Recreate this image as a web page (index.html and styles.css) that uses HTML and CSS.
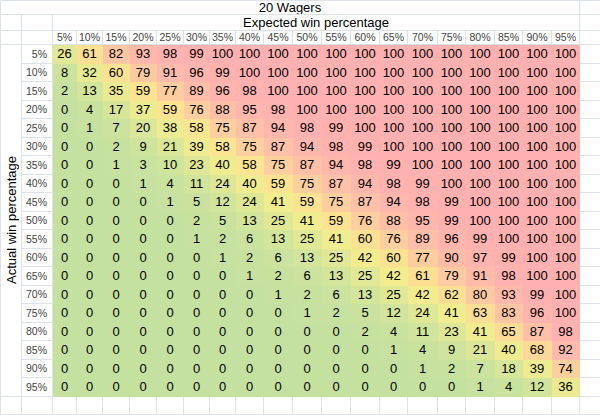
FILE: index.html
```html
<!DOCTYPE html>
<html>
<head>
<meta charset="utf-8">
<link rel="stylesheet" href="styles.css">
</head>
<body>
<div class="sheet">
  <div class="c title">20 Wagers</div><div class="c"></div>
  <div class="c"></div><div class="c"></div><div class="c xlabel">Expected win percentage</div><div class="c"></div>
  <div class="c"></div><div class="c"></div>
  <div class="c h">5%</div><div class="c h">10%</div><div class="c h">15%</div><div class="c h">20%</div><div class="c h">25%</div><div class="c h">30%</div><div class="c h">35%</div><div class="c h">40%</div><div class="c h">45%</div><div class="c h">50%</div><div class="c h">55%</div><div class="c h">60%</div><div class="c h">65%</div><div class="c h">70%</div><div class="c h">75%</div><div class="c h">80%</div><div class="c h">85%</div><div class="c h">90%</div><div class="c h">95%</div><div class="c"></div>
  <div class="c ylabel"><span>Actual win percentage</span></div>
  <div class="c r">5%</div><div class="c v">26</div><div class="c v">61</div><div class="c v">82</div><div class="c v">93</div><div class="c v">98</div><div class="c v">99</div><div class="c v">100</div><div class="c v">100</div><div class="c v">100</div><div class="c v">100</div><div class="c v">100</div><div class="c v">100</div><div class="c v">100</div><div class="c v">100</div><div class="c v">100</div><div class="c v">100</div><div class="c v">100</div><div class="c v">100</div><div class="c v">100</div><div class="c"></div>
  <div class="c r">10%</div><div class="c v">8</div><div class="c v">32</div><div class="c v">60</div><div class="c v">79</div><div class="c v">91</div><div class="c v">96</div><div class="c v">99</div><div class="c v">100</div><div class="c v">100</div><div class="c v">100</div><div class="c v">100</div><div class="c v">100</div><div class="c v">100</div><div class="c v">100</div><div class="c v">100</div><div class="c v">100</div><div class="c v">100</div><div class="c v">100</div><div class="c v">100</div><div class="c"></div>
  <div class="c r">15%</div><div class="c v">2</div><div class="c v">13</div><div class="c v">35</div><div class="c v">59</div><div class="c v">77</div><div class="c v">89</div><div class="c v">96</div><div class="c v">98</div><div class="c v">100</div><div class="c v">100</div><div class="c v">100</div><div class="c v">100</div><div class="c v">100</div><div class="c v">100</div><div class="c v">100</div><div class="c v">100</div><div class="c v">100</div><div class="c v">100</div><div class="c v">100</div><div class="c"></div>
  <div class="c r">20%</div><div class="c v">0</div><div class="c v">4</div><div class="c v">17</div><div class="c v">37</div><div class="c v">59</div><div class="c v">76</div><div class="c v">88</div><div class="c v">95</div><div class="c v">98</div><div class="c v">100</div><div class="c v">100</div><div class="c v">100</div><div class="c v">100</div><div class="c v">100</div><div class="c v">100</div><div class="c v">100</div><div class="c v">100</div><div class="c v">100</div><div class="c v">100</div><div class="c"></div>
  <div class="c r">25%</div><div class="c v">0</div><div class="c v">1</div><div class="c v">7</div><div class="c v">20</div><div class="c v">38</div><div class="c v">58</div><div class="c v">75</div><div class="c v">87</div><div class="c v">94</div><div class="c v">98</div><div class="c v">99</div><div class="c v">100</div><div class="c v">100</div><div class="c v">100</div><div class="c v">100</div><div class="c v">100</div><div class="c v">100</div><div class="c v">100</div><div class="c v">100</div><div class="c"></div>
  <div class="c r">30%</div><div class="c v">0</div><div class="c v">0</div><div class="c v">2</div><div class="c v">9</div><div class="c v">21</div><div class="c v">39</div><div class="c v">58</div><div class="c v">75</div><div class="c v">87</div><div class="c v">94</div><div class="c v">98</div><div class="c v">99</div><div class="c v">100</div><div class="c v">100</div><div class="c v">100</div><div class="c v">100</div><div class="c v">100</div><div class="c v">100</div><div class="c v">100</div><div class="c"></div>
  <div class="c r">35%</div><div class="c v">0</div><div class="c v">0</div><div class="c v">1</div><div class="c v">3</div><div class="c v">10</div><div class="c v">23</div><div class="c v">40</div><div class="c v">58</div><div class="c v">75</div><div class="c v">87</div><div class="c v">94</div><div class="c v">98</div><div class="c v">99</div><div class="c v">100</div><div class="c v">100</div><div class="c v">100</div><div class="c v">100</div><div class="c v">100</div><div class="c v">100</div><div class="c"></div>
  <div class="c r">40%</div><div class="c v">0</div><div class="c v">0</div><div class="c v">0</div><div class="c v">1</div><div class="c v">4</div><div class="c v">11</div><div class="c v">24</div><div class="c v">40</div><div class="c v">59</div><div class="c v">75</div><div class="c v">87</div><div class="c v">94</div><div class="c v">98</div><div class="c v">99</div><div class="c v">100</div><div class="c v">100</div><div class="c v">100</div><div class="c v">100</div><div class="c v">100</div><div class="c"></div>
  <div class="c r">45%</div><div class="c v">0</div><div class="c v">0</div><div class="c v">0</div><div class="c v">0</div><div class="c v">1</div><div class="c v">5</div><div class="c v">12</div><div class="c v">24</div><div class="c v">41</div><div class="c v">59</div><div class="c v">75</div><div class="c v">87</div><div class="c v">94</div><div class="c v">98</div><div class="c v">99</div><div class="c v">100</div><div class="c v">100</div><div class="c v">100</div><div class="c v">100</div><div class="c"></div>
  <div class="c r">50%</div><div class="c v">0</div><div class="c v">0</div><div class="c v">0</div><div class="c v">0</div><div class="c v">0</div><div class="c v">2</div><div class="c v">5</div><div class="c v">13</div><div class="c v">25</div><div class="c v">41</div><div class="c v">59</div><div class="c v">76</div><div class="c v">88</div><div class="c v">95</div><div class="c v">99</div><div class="c v">100</div><div class="c v">100</div><div class="c v">100</div><div class="c v">100</div><div class="c"></div>
  <div class="c r">55%</div><div class="c v">0</div><div class="c v">0</div><div class="c v">0</div><div class="c v">0</div><div class="c v">0</div><div class="c v">1</div><div class="c v">2</div><div class="c v">6</div><div class="c v">13</div><div class="c v">25</div><div class="c v">41</div><div class="c v">60</div><div class="c v">76</div><div class="c v">89</div><div class="c v">96</div><div class="c v">99</div><div class="c v">100</div><div class="c v">100</div><div class="c v">100</div><div class="c"></div>
  <div class="c r">60%</div><div class="c v">0</div><div class="c v">0</div><div class="c v">0</div><div class="c v">0</div><div class="c v">0</div><div class="c v">0</div><div class="c v">1</div><div class="c v">2</div><div class="c v">6</div><div class="c v">13</div><div class="c v">25</div><div class="c v">42</div><div class="c v">60</div><div class="c v">77</div><div class="c v">90</div><div class="c v">97</div><div class="c v">99</div><div class="c v">100</div><div class="c v">100</div><div class="c"></div>
  <div class="c r">65%</div><div class="c v">0</div><div class="c v">0</div><div class="c v">0</div><div class="c v">0</div><div class="c v">0</div><div class="c v">0</div><div class="c v">0</div><div class="c v">1</div><div class="c v">2</div><div class="c v">6</div><div class="c v">13</div><div class="c v">25</div><div class="c v">42</div><div class="c v">61</div><div class="c v">79</div><div class="c v">91</div><div class="c v">98</div><div class="c v">100</div><div class="c v">100</div><div class="c"></div>
  <div class="c r">70%</div><div class="c v">0</div><div class="c v">0</div><div class="c v">0</div><div class="c v">0</div><div class="c v">0</div><div class="c v">0</div><div class="c v">0</div><div class="c v">0</div><div class="c v">1</div><div class="c v">2</div><div class="c v">6</div><div class="c v">13</div><div class="c v">25</div><div class="c v">42</div><div class="c v">62</div><div class="c v">80</div><div class="c v">93</div><div class="c v">99</div><div class="c v">100</div><div class="c"></div>
  <div class="c r">75%</div><div class="c v">0</div><div class="c v">0</div><div class="c v">0</div><div class="c v">0</div><div class="c v">0</div><div class="c v">0</div><div class="c v">0</div><div class="c v">0</div><div class="c v">0</div><div class="c v">1</div><div class="c v">2</div><div class="c v">5</div><div class="c v">12</div><div class="c v">24</div><div class="c v">41</div><div class="c v">63</div><div class="c v">83</div><div class="c v">96</div><div class="c v">100</div><div class="c"></div>
  <div class="c r">80%</div><div class="c v">0</div><div class="c v">0</div><div class="c v">0</div><div class="c v">0</div><div class="c v">0</div><div class="c v">0</div><div class="c v">0</div><div class="c v">0</div><div class="c v">0</div><div class="c v">0</div><div class="c v">0</div><div class="c v">2</div><div class="c v">4</div><div class="c v">11</div><div class="c v">23</div><div class="c v">41</div><div class="c v">65</div><div class="c v">87</div><div class="c v">98</div><div class="c"></div>
  <div class="c r">85%</div><div class="c v">0</div><div class="c v">0</div><div class="c v">0</div><div class="c v">0</div><div class="c v">0</div><div class="c v">0</div><div class="c v">0</div><div class="c v">0</div><div class="c v">0</div><div class="c v">0</div><div class="c v">0</div><div class="c v">0</div><div class="c v">1</div><div class="c v">4</div><div class="c v">9</div><div class="c v">21</div><div class="c v">40</div><div class="c v">68</div><div class="c v">92</div><div class="c"></div>
  <div class="c r">90%</div><div class="c v">0</div><div class="c v">0</div><div class="c v">0</div><div class="c v">0</div><div class="c v">0</div><div class="c v">0</div><div class="c v">0</div><div class="c v">0</div><div class="c v">0</div><div class="c v">0</div><div class="c v">0</div><div class="c v">0</div><div class="c v">0</div><div class="c v">1</div><div class="c v">2</div><div class="c v">7</div><div class="c v">18</div><div class="c v">39</div><div class="c v">74</div><div class="c"></div>
  <div class="c r">95%</div><div class="c v">0</div><div class="c v">0</div><div class="c v">0</div><div class="c v">0</div><div class="c v">0</div><div class="c v">0</div><div class="c v">0</div><div class="c v">0</div><div class="c v">0</div><div class="c v">0</div><div class="c v">0</div><div class="c v">0</div><div class="c v">0</div><div class="c v">0</div><div class="c v">0</div><div class="c v">1</div><div class="c v">4</div><div class="c v">12</div><div class="c v">36</div><div class="c"></div>
  <div class="c"></div><div class="c"></div><div class="c"></div><div class="c"></div><div class="c"></div><div class="c"></div><div class="c"></div><div class="c"></div><div class="c"></div><div class="c"></div><div class="c"></div><div class="c"></div><div class="c"></div><div class="c"></div><div class="c"></div><div class="c"></div><div class="c"></div><div class="c"></div><div class="c"></div><div class="c"></div><div class="c"></div><div class="c"></div>
</div>
<script src="script.js"></script>
</body>
</html>
```

FILE: styles.css
```css
html, body {
  margin: 0;
  padding: 0;
  background: #ffffff;
}
body {
  font-family: "Liberation Sans", Arial, sans-serif;
  color: #000;
  overflow: hidden;
}
.sheet {
  display: grid;
  width: 600px;
  grid-template-columns: 21px 31px 24px 26px 27px 27px 27px 26px 26px 28px 29px 29px 29px 29px 28px 30px 28px 29px 28px 29px 28px 1fr;
  grid-template-rows: 14px 16px 14px repeat(19, 18.5px) 18px;
  border-top: 1px solid #dde1e8;
  border-left: 1px solid #dde1e8;
}
.c {
  box-sizing: border-box;
  border-right: 1px solid #dde1e8;
  border-bottom: 1px solid #dde1e8;
  display: flex;
  align-items: center;
  justify-content: center;
  font-size: 13px;
  line-height: 1;
  white-space: nowrap;
  overflow: hidden;
}
.title {
  grid-column: 1 / span 21;
  grid-row: 1;
}
.xlabel {
  grid-column: 3 / span 19;
}
.ylabel {
  grid-column: 1;
  grid-row: 4 / span 19;
}
.ylabel span {
  writing-mode: vertical-rl;
  transform: rotate(180deg);
}
.h {
  font-size: 10.5px;
  color: #444;
}
.r {
  font-size: 10.5px;
  color: #444;
  justify-content: flex-end;
  padding-right: 5px;
}
.v {
  border-color: transparent;
}
```

FILE: script.js
```js
(function () {
  var lo = [197, 225, 160];
  var mid = [250, 238, 140];
  var hi = [255, 176, 176];
  function mix(a, b, t) {
    return [0, 1, 2].map(function (i) { return Math.round(a[i] + (b[i] - a[i]) * t); });
  }
  function scale(v) {
    var c = v <= 50 ? mix(lo, mid, v / 50) : mix(mid, hi, (v - 50) / 50);
    return 'rgb(' + c.join(',') + ')';
  }
  document.querySelectorAll('.v').forEach(function (el) {
    el.style.backgroundColor = scale(parseFloat(el.textContent));
  });
})();
```
